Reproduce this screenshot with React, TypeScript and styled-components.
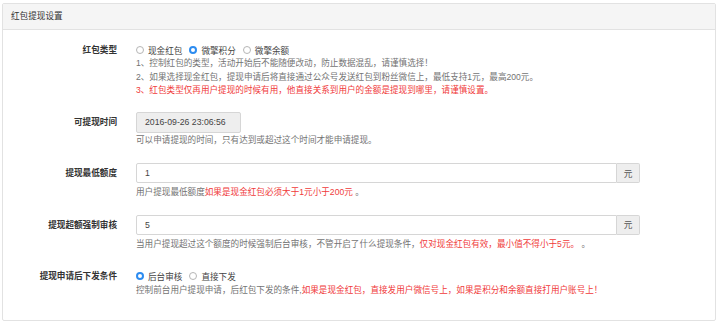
import styled, { createGlobalStyle } from "styled-components";

const GlobalStyle = createGlobalStyle`
  html, body {
    margin: 0;
    padding: 0;
    background: #ffffff;
  }
  body {
    font-family: "Liberation Sans", "Noto Sans CJK SC", sans-serif;
    color: #333333;
  }
`;

const Page = styled.div`
  padding: 3px 4px 0 2px;
`;

const Panel = styled.div`
  border: 1px solid #e2e2e2;
  border-radius: 2px;
  background: #ffffff;
  height: 318px;
  box-sizing: border-box;
`;

const PanelHeading = styled.div`
  height: 25px;
  line-height: 25px;
  padding: 0 8px;
  background: #f5f5f5;
  border-bottom: 1px solid #e2e2e2;
  font-size: 8.6px;
  color: #333;
`;

const PanelBody = styled.div`
  padding: 13px 75px 0 0;
`;

const FormGroup = styled.div<{ gap?: number }>`
  display: grid;
  grid-template-columns: 114px 1fr;
  column-gap: 19px;
  margin-bottom: ${(p) => p.gap ?? 14}px;
`;

const Label = styled.div<{ h: number }>`
  text-align: right;
  font-weight: bold;
  font-size: 8.6px;
  line-height: ${(p) => p.h}px;
  color: #333;
`;

const Controls = styled.div`
  display: flex;
  flex-direction: column;
`;

const RadioRow = styled.div`
  display: flex;
  align-items: center;
  height: 14px;
  gap: 7px;
`;

const RadioItem = styled.label`
  display: flex;
  align-items: center;
  gap: 4px;
  font-size: 8.6px;
  color: #444;
`;

const RadioDot = styled.span<{ checked?: boolean }>`
  width: 8px;
  height: 8px;
  border-radius: 50%;
  box-sizing: border-box;
  border: ${(p) => (p.checked ? "2.5px solid #2d8cf0" : "1px solid #b5b5b5")};
  background: #ffffff;
`;

const Help = styled.div`
  margin-top: 3px;
  font-size: 8.6px;
  line-height: 13.5px;
  color: #737373;
`;

const Red = styled.span`
  color: #f03a3a;
`;

const InputGroup = styled.div`
  display: flex;
  height: 20px;
`;

const TextInput = styled.input`
  box-sizing: border-box;
  height: 100%;
  flex: 1;
  min-width: 0;
  border: 1px solid #d6d6d6;
  border-radius: 2px 0 0 2px;
  padding: 0 8px;
  font-family: inherit;
  font-size: 8.7px;
  color: #444;
  background: #ffffff;
  outline: none;
`;

const ReadonlyBox = styled.div`
  box-sizing: border-box;
  width: 105px;
  height: 21px;
  line-height: 19px;
  border: 1px solid #d6d6d6;
  border-radius: 2px;
  padding: 0 8px;
  background: #eeeeee;
  font-size: 8.7px;
  color: #444;
`;

const Addon = styled.span`
  box-sizing: border-box;
  width: 23px;
  height: 100%;
  display: flex;
  align-items: center;
  justify-content: center;
  border: 1px solid #d6d6d6;
  border-left: none;
  border-radius: 0 2px 2px 0;
  background: #eeeeee;
  font-size: 8.7px;
  color: #555;
`;

function Radio({ label, checked }: { label: string; checked?: boolean }) {
  return (
    <RadioItem>
      <RadioDot checked={checked} />
      {label}
    </RadioItem>
  );
}

export default function App() {
  return (
    <Page>
      <GlobalStyle />
      <Panel>
        <PanelHeading>红包提现设置</PanelHeading>
        <PanelBody>
          <FormGroup gap={14}>
            <Label h={14}>红包类型</Label>
            <Controls>
              <RadioRow>
                <Radio label="现金红包" />
                <Radio label="微擎积分" checked />
                <Radio label="微擎余额" />
              </RadioRow>
              <Help style={{ marginTop: 0 }}>
                1、控制红包的类型，活动开始后不能随便改动，防止数据混乱，请谨慎选择！
                <br />
                2、如果选择现金红包，提现申请后将直接通过公众号发送红包到粉丝微信上，最低支持1元，最高200元。
                <br />
                <Red>
                  3、红包类型仅再用户提现的时候有用，他直接关系到用户的金额是提现到哪里，请谨慎设置。
                </Red>
              </Help>
            </Controls>
          </FormGroup>

          <FormGroup gap={16}>
            <Label h={21}>可提现时间</Label>
            <Controls>
              <ReadonlyBox>2016-09-26 23:06:56</ReadonlyBox>
              <Help style={{ marginTop: 1 }}>
                可以申请提现的时间，只有达到或超过这个时间才能申请提现。
              </Help>
            </Controls>
          </FormGroup>

          <FormGroup gap={15}>
            <Label h={20}>提现最低额度</Label>
            <Controls>
              <InputGroup>
                <TextInput defaultValue="1" />
                <Addon>元</Addon>
              </InputGroup>
              <Help>
                用户提现最低额度<Red>如果是现金红包必须大于1元小于200元</Red> 。
              </Help>
            </Controls>
          </FormGroup>

          <FormGroup gap={18}>
            <Label h={20}>提现超额强制审核</Label>
            <Controls>
              <InputGroup>
                <TextInput defaultValue="5" />
                <Addon>元</Addon>
              </InputGroup>
              <Help>
                当用户提现超过这个额度的时候强制后台审核，不管开启了什么提现条件，
                <Red>仅对现金红包有效，最小值不得小于5元。</Red> 。
              </Help>
            </Controls>
          </FormGroup>

          <FormGroup gap={0}>
            <Label h={14}>提现申请后下发条件</Label>
            <Controls>
              <RadioRow>
                <Radio label="后台审核" checked />
                <Radio label="直接下发" />
              </RadioRow>
              <Help style={{ marginTop: 1 }}>
                控制前台用户提现申请，后红包下发的条件,
                <Red>如果是现金红包，直接发用户微信号上，如果是积分和余额直接打用户账号上！</Red>
              </Help>
            </Controls>
          </FormGroup>
        </PanelBody>
      </Panel>
    </Page>
  );
}
